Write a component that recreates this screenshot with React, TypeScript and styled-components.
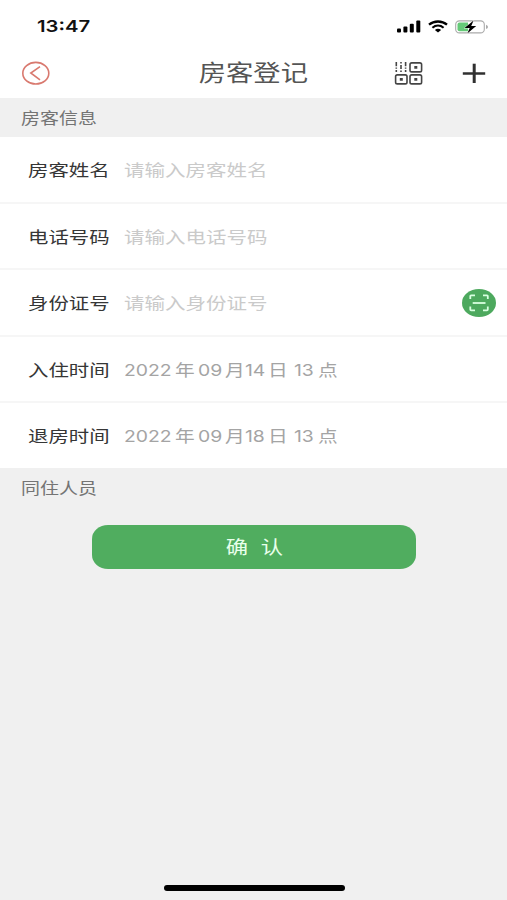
import React from 'react';
import styled, { createGlobalStyle } from 'styled-components';

const GlobalStyle = createGlobalStyle`
  * { box-sizing: border-box; }
  body {
    margin: 0;
    background: #f0f0f0;
    font-family: Inter, "Noto Sans CJK SC", sans-serif;
  }
`;

const Screen = styled.main`
  display: flex;
  flex-direction: column;
  width: 507px;
  height: 900px;
  background: #f0f0f0;
  overflow: hidden;
`;

const StatusBar = styled.div`
  display: flex;
  align-items: center;
  justify-content: space-between;
  height: 48px;
  padding: 5px 18px 0 37px;
  background: #fff;
`;

const StatusIcons = styled.div`
  display: flex;
  align-items: center;
  gap: 7px;
`;

const WideText = styled.span<{ $size: number; $color: string; $weight?: number; $stretch?: number; $origin?: string }>`
  display: inline-block;
  font-size: ${p => p.$size}px;
  line-height: 1.3;
  font-weight: ${p => p.$weight ?? 400};
  color: ${p => p.$color};
  white-space: pre;
  transform: scaleX(${p => p.$stretch ?? 1.2});
  transform-origin: ${p => p.$origin ?? 'left'} center;
`;

const NavBar = styled.header`
  display: grid;
  grid-template-columns: 120px 1fr 120px;
  align-items: center;
  height: 50px;
  background: #fff;
`;

const BackButton = styled.button`
  display: flex;
  width: 30px;
  margin-left: 21px;
  padding: 0;
  border: 0;
  background: none;
`;

const Title = styled.h1`
  margin: 0;
  padding-top: 1px;
  font-size: 22px;
  line-height: 1;
  text-align: center;
`;

const NavActions = styled.div`
  display: flex;
  align-items: center;
  gap: 39px;
  padding-left: 7px;
`;

const SectionHeader = styled.h2`
  display: flex;
  align-items: center;
  height: 39px;
  margin: 0;
  padding: 3px 0 0 21px;
  background: #f0f0f0;
`;

const Rows = styled.div`
  display: grid;
  grid-template-rows: 67px repeat(3, 66.4px) 65.3px;
  height: 331.5px;
`;

const Row = styled.div`
  display: grid;
  grid-template-columns: 96px 1fr 34px;
  align-items: center;
  padding: 3px 11px 0 28px;
  background: #fff;
  border-bottom: 2px solid #f6f6f6;
  &:last-child { border-bottom-color: #fff; }
`;

const DateValue = styled.div`
  display: flex;
  align-items: center;
`;

const DatePart = styled.span<{ $width: number }>`
  width: ${p => p.$width}px;
  display: flex;
`;

const ScanButton = styled.button`
  display: flex;
  margin-bottom: 2px;
  padding: 0;
  border: 0;
  background: none;
`;

const ConfirmButton = styled.button`
  display: flex;
  align-items: center;
  justify-content: center;
  width: 324px;
  height: 44px;
  margin: 17px 0 0 92px;
  padding: 2px 0 0;
  border: 0;
  border-radius: 16px / 14px;
  background: #50ad5f;
  font-family: inherit;
`;

const HomeIndicator = styled.div`
  width: 181px;
  height: 6px;
  margin: auto auto 9px 163.5px;
  border-radius: 3px;
  background: #000;
`;

const SignalIcon = () => (
  <svg width="24" height="13" viewBox="0 0 24 13">
    <rect x="0" y="8.5" width="4" height="4" rx="1" />
    <rect x="6.4" y="6.4" width="4" height="6.1" rx="1" />
    <rect x="12.8" y="3.7" width="4" height="8.8" rx="1" />
    <rect x="19.3" y="0.5" width="4" height="12" rx="1" />
  </svg>
);

const WifiIcon = () => (
  <svg width="20" height="13" viewBox="0 0 20 13" fill="none" stroke="#000">
    <path d="M1 4.7C6 .4 14 .4 19 4.7" strokeWidth="2.3" />
    <path d="M4.4 7.7c3.3-2.8 7.9-2.8 11.2 0" strokeWidth="2.1" />
    <path d="M6.9 9.9c1.9-1.4 4.3-1.4 6.2 0L10 12.5Z" fill="#000" stroke="none" />
  </svg>
);

const BatteryIcon = () => (
  <svg width="34" height="14" viewBox="0 0 34 14">
    <rect x="0.7" y="0.9" width="28.6" height="12" rx="3.7" fill="#fff" stroke="#aaa" strokeWidth="1.1" />
    <path d="M4.5 2.5H13v8.8H4.5q-2 0-2-2V4.5q0-2 2-2Z" fill="#65ca78" />
    <path d="M31 4.8q2 .7 2 2.1T31 9Z" fill="#aaa" />
    <path d="M18.6.5 9.5 8h5.2l-2.4 5.5L21.2 6h-5Z" fill="#000" stroke="#fff" strokeWidth=".8" paintOrder="stroke" />
  </svg>
);

const BackIcon = () => (
  <svg width="29" height="24" viewBox="0 0 29 24" fill="none" stroke="#d9796f">
    <ellipse cx="14.8" cy="12.2" rx="13" ry="10.8" strokeWidth="1.6" />
    <path d="M19 5.6 9.8 12l9.2 6.8" strokeWidth="1.6" />
  </svg>
);

const CodeIcon = () => (
  <svg width="29" height="24" viewBox="0 0 29 24" fill="none" stroke="#454545" strokeWidth="1.6">
    <rect x="16" y="1.9" width="11.6" height="9" rx="1.7" />
    <rect x="1.6" y="13.9" width="11.4" height="9" rx="1.7" />
    <rect x="16" y="13.9" width="11.6" height="9" rx="1.7" />
    <path d="M20.3 6.4h3M5.8 18.4h3M20.3 18.4h3" strokeWidth="2.8" />
    <path d="M2.3 1v4.2M2.3 6.5v1.3M2.3 9v2M7 1v1.4M7 4v4M7 9.5V11M11.6 1v4.2M11.6 6.5v1.3M11.6 9v2" />
  </svg>
);

const PlusIcon = () => (
  <svg width="24" height="20" viewBox="0 0 24 20" stroke="#303030" strokeWidth="2.5">
    <path d="M.8 10.5h22.4" />
    <path d="M12.2 .7v19.3" strokeWidth="3" />
  </svg>
);

const ScanIcon = () => (
  <svg width="34" height="28" viewBox="0 0 34 28" fill="none" stroke="#d8ffe0" strokeWidth="1.8">
    <ellipse cx="17" cy="14" rx="17" ry="14" fill="#4da95e" stroke="none" />
    <path d="M8.3 10V7q0-.7.8-.7H13M21 6.3h4q.8 0 .8.7v3M25.8 17.6v3q0 .7-.8.7h-4M13 21.3H9.1q-.8 0-.8-.7v-3" />
    <path d="M10.7 14h12.8" />
  </svg>
);

const fields = [
  { label: '房客姓名', placeholder: '请输入房客姓名', scan: false },
  { label: '电话号码', placeholder: '请输入电话号码', scan: false },
  { label: '身份证号', placeholder: '请输入身份证号', scan: true },
];

const dates = [
  { label: '入住时间', day: '14' },
  { label: '退房时间', day: '18' },
];

const Label = ({ children }: { children: string }) => (
  <WideText $size={16.4} $stretch={1.245} $color="#363636">{children}</WideText>
);

function StayDate({ day }: { day: string }) {
  const parts: [string, number][] = [
    ['2022', 50.5], ['年', 23.5], ['09', 26.5], ['月', 20],
    [day, 23], ['日', 26], ['13', 24], ['点', 20],
  ];
  return (
    <DateValue>
      {parts.map(([text, width], i) => (
        <DatePart key={i} $width={width}>
          <WideText $size={16} $stretch={i % 2 ? 1.23 : 1.21} $color="#a4a4a4">{text}</WideText>
        </DatePart>
      ))}
    </DateValue>
  );
}

export default function App() {
  return (
    <Screen>
      <GlobalStyle />
      <StatusBar>
        <WideText $size={16.5} $stretch={1.23} $color="#111" $weight={600}>13:47</WideText>
        <StatusIcons>
          <SignalIcon />
          <WifiIcon />
          <BatteryIcon />
        </StatusIcons>
      </StatusBar>
      <NavBar>
        <BackButton aria-label="返回"><BackIcon /></BackButton>
        <Title><WideText $size={22.2} $stretch={1.23} $color="#555" $origin="center">房客登记</WideText></Title>
        <NavActions><CodeIcon /><PlusIcon /></NavActions>
      </NavBar>
      <SectionHeader><WideText $size={15.5} $stretch={1.225} $color="#747474">房客信息</WideText></SectionHeader>
      <Rows>
        {fields.map(f => (
          <Row key={f.label}>
            <Label>{f.label}</Label>
            <WideText $size={16.4} $stretch={1.25} $color="#cacaca">{f.placeholder}</WideText>
            {f.scan && <ScanButton aria-label="扫描"><ScanIcon /></ScanButton>}
          </Row>
        ))}
        {dates.map(d => (
          <Row key={d.label}>
            <Label>{d.label}</Label>
            <StayDate day={d.day} />
          </Row>
        ))}
      </Rows>
      <SectionHeader><WideText $size={15.5} $stretch={1.225} $color="#747474">同住人员</WideText></SectionHeader>
      <ConfirmButton><WideText $size={18.3} $stretch={1.22} $color="#e8ffeb" $origin="center">确  认</WideText></ConfirmButton>
      <HomeIndicator />
    </Screen>
  );
}
